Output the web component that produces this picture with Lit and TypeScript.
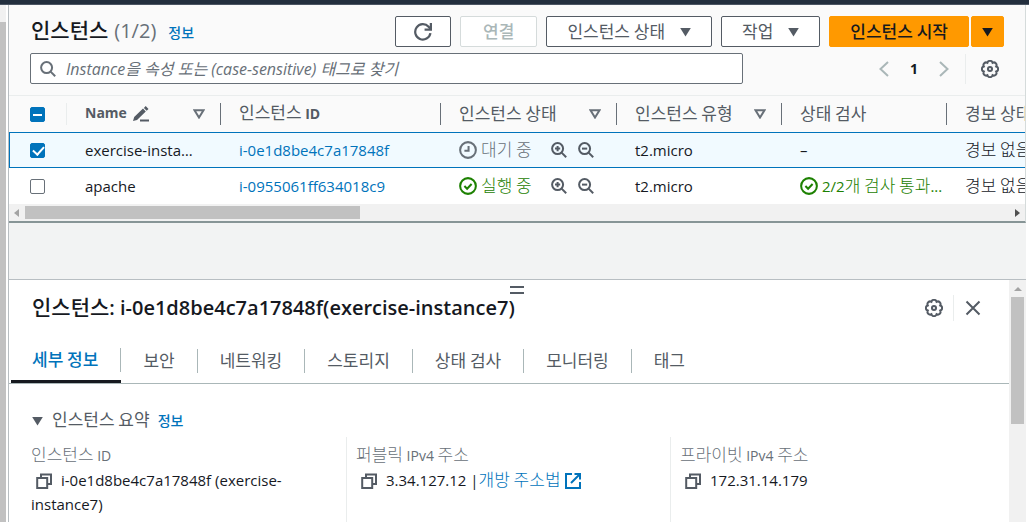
import { LitElement, html, css, svg, nothing } from "lit";
import { customElement, state } from "lit/decorators.js";
import { classMap } from "lit/directives/class-map.js";

/** Wraps every run of Hangul so that it can take its own optical size. */
const ko = (text: string) =>
  text
    .split(/([\uac00-\ud7a3]+(?: [\uac00-\ud7a3]+)*)/)
    .filter((part) => part !== "")
    .map((part) => (/[\uac00-\ud7a3]/.test(part) ? html`<span class="ko">${part}</span>` : part));

/** Eight-lobed outline of the settings wheel. */
const wheel = () => {
  const at = (k: number) => {
    const a = ((k * 45 + 22.5) * Math.PI) / 180;
    return `${(8 + 6 * Math.cos(a)).toFixed(2)} ${(8 + 6 * Math.sin(a)).toFixed(2)}`;
  };
  return `M${at(-1)}` + [0, 1, 2, 3, 4, 5, 6, 7].map((k) => `A2.4 2.4 0 0 1 ${at(k)}`).join("") + "z";
};

const icon = (body: unknown, cls = "") =>
  html`<svg class="icon ${cls}" viewBox="0 0 16 16" aria-hidden="true">${body}</svg>`;

const search = svg`<circle cx="6.6" cy="6.6" r="5.5"/><path d="M10.6 10.6 15.2 15.2"/>`;
const zoomIn = svg`${search}<path d="M6.6 4v5.2M4 6.6h5.2"/>`;
const zoomOut = svg`${search}<path d="M4 6.6h5.2"/>`;
const refresh = svg`<path d="M14.6 9A6.8 6.8 0 1 1 13 3.4L15 5.6"/><path d="M15 0v5.8H9.4"/>`;
const left = svg`<path d="M12 1 4.5 8l7.5 7"/>`;
const right = svg`<path d="M4 1l7.5 7L4 15"/>`;
const close = svg`<path d="M1.5 1.5l13 13M14.5 1.5l-13 13"/>`;
const copy = svg`<path d="M5 4.5V1.5h10v9.5h-3"/><path d="M1.2 5h10v10h-10z"/>`;
const external = svg`<path d="M7 1H1v14h14V9"/><path d="M9.5 1H15v5.5M15 1 6 10"/>`;
const clock = svg`<circle cx="8" cy="8" r="7"/><path d="M8.5 4.5v4.2H4.8"/>`;
const ok = svg`<circle cx="8" cy="8" r="7"/><path d="M4.8 8l2.4 2.4 4-4.2"/>`;
const pencil = svg`<path class="solid" d="M0 15l1.2-4L10 2.6l2.8 2.8L4 14zM10.9 1.9l1.800-1.800 2.800 2.800-1.800 1.800z"/><path d="M7 14.5h9"/>`;
const gear = svg`<path d=${wheel()} /><circle cx="8" cy="8" r="1.8"/>`;
const caret = html`<svg class="caret" viewBox="0 0 12 10" aria-hidden="true"><path d="M.2.5h11.600L6 9.800z"/></svg>`;
const sort = html`<svg class="sort" viewBox="0 0 12 10" aria-hidden="true"><path d="M1.5 1.2h9L6 8.5z"/></svg>`;

interface Instance {
  name: string;
  id: string;
  running: boolean;
  type: string;
  check: string;
  alarm: string;
}

const INSTANCES: Instance[] = [
  { name: "exercise-instance7", id: "i-0e1d8be4c7a17848f", running: false, type: "t2.micro", check: "", alarm: "경보 없음" },
  { name: "apache", id: "i-0955061ff634018c9", running: true, type: "t2.micro", check: "2/2개 검사 통과...", alarm: "경보 없음" },
];

const TABS = ["세부 정보", "보안", "네트워킹", "스토리지", "상태 검사", "모니터링", "태그"];

@customElement("app-root")
export class AppRoot extends LitElement {
  @state() private selected = "i-0e1d8be4c7a17848f";
  @state() private tab = 0;

  static styles = css`
    :host {
      display: flex;
      flex-direction: column;
      height: 100vh;
      overflow: hidden;
      font: 14px/22px "Open Sans", "Noto Sans CJK KR", sans-serif;
      color: #16191f;
      background: #fff;
    }
    * { box-sizing: border-box; }
    h1, h2, h3, p, dl, dd, dt { margin: 0; font-weight: 400; }
    button { font: inherit; color: inherit; cursor: pointer; margin: 0; }
    a { color: #0073bb; text-decoration: none; }
    .ko { font-family: "Noto Sans CJK KR", sans-serif; font-size: 17px; line-height: 20px; }
    .icon { width: 16px; height: 16px; fill: none; stroke: currentColor; stroke-width: 2; flex: none; }
    .icon .solid { fill: currentColor; stroke: none; }
    .thin { stroke-width: 1.8; }
    .big { width: 18px; height: 18px; }
    .caret { width: 11px; height: 10px; fill: currentColor; flex: none; }
    .sort { width: 12px; height: 10px; fill: none; stroke: #687078; stroke-width: 2; flex: none; }
    .bare { border: 0; background: none; padding: 0; display: flex; align-items: center; }

    .topbar { flex: none; height: 5px; background: #232f3e; border-bottom: 1px solid #4b5563; }
    .frame { flex: 1; min-height: 0; display: flex; }
    .rail { flex: none; width: 6px; margin-right: 2px; background: #c1c1c1; border-top: 17px solid #f1f1f1; }
    .main { flex: 1; min-width: 0; display: flex; flex-direction: column; background: #f2f3f3; border-left: 1px solid #b8bec2; margin-right: 3px; }

    .list { background: #fafafa; border-bottom: 2px solid #879596; border-right: 1px solid #d5dbdb; margin-bottom: 56px; }
    .head { display: flex; gap: 9px; align-items: center; padding: 11px 21px 0 22px; }
    .title { flex: 1; display: flex; align-items: baseline; font-size: 20px; line-height: 26px; color: #687078; white-space: nowrap; }
    .title b { color: #16191f; font-weight: 500; margin-right: 6px; }
    .title b .ko, .dtitle .ko { font-size: 21px; font-weight: 500; }
    .title a { margin-left: 12px; font-size: 14px; }
    .info .ko { font-size: 14px; font-weight: 500; }
    .btn { height: 31px; display: flex; align-items: center; gap: 15px; padding: 0 20px 2px; background: #fff; border: 1px solid #545b64; border-radius: 2px; color: #545b64; white-space: nowrap; }
    .btn .icon, .btn .caret { margin-top: 2px; }
    .btn.refresh { padding: 0 18px 2px; }
    .btn.off { border-color: #d5dbdb; color: #aab7b8; padding: 0 22px 2px; }
    .btn.off .ko, .btn.go .ko { font-weight: 500; }
    .split { display: flex; gap: 2px; }
    .btn.go { background: #ff9900; border-color: #ff9900; color: #16191f; }
    .btn.go + .go { padding: 0 10px 2px; }

    .tools { display: flex; gap: 133px; align-items: center; padding: 6px 21px 11px 21px; }
    .search { flex: 1; min-width: 0; display: flex; align-items: center; gap: 10px; height: 31px; padding: 0 9px; border: 1px solid #687078; border-radius: 2px; background: #fff; color: #687078; }
    .search input { flex: 1; min-width: 0; border: 0; outline: 0; padding: 0; background: none; font: 16px/20px "Open Sans", "Noto Sans CJK KR", sans-serif; }
    .search input::placeholder { color: #687078; font-style: italic; opacity: 1; }
    .pager { display: flex; align-items: center; color: #545b64; padding-right: 5px; }
    .pager .arrow { color: #aab7b8; }
    .pager b { width: 44px; text-align: center; color: #16191f; font-weight: 700; }
    .pager .cfg { margin-left: 13px; padding-left: 15px; height: 30px; border-left: 1px solid #eaeded; }

    .scroller { overflow: hidden; border-top: 1px solid #eaeded; background: #fff; }
    table { table-layout: fixed; width: 1200px; border-collapse: separate; border-spacing: 0; }
    .c0 { width: 58px; } .c1 { width: 154px; } .c2 { width: 220px; } .c3 { width: 176px; } .c4, .c5 { width: 165px; }
    th { height: 36px; padding: 0; text-align: left; font-weight: 700; color: #545b64; background: #fafafa; }
    th .ko { font-weight: 400; }
    .th { display: flex; align-items: center; height: 22px; padding: 0 15px 2px 18px; border-right: 1px solid #687078; white-space: nowrap; }
    .th .icon { margin: 2px 0 0 6px; }
    .th .sort { margin: 2px 0 0 auto; }
    .th.pick { padding: 0 0 0 21px; }
    .th.pick { border-color: #eaeded; }
    .th.last { border: 0; }
    td { height: 36px; padding: 0 0 0 18px; font-size: 15px; white-space: nowrap; overflow: hidden; text-overflow: ellipsis; }
    td:first-child { padding-left: 21px; }
    td.name { padding-right: 25px; }
    tr.on td { background: #f1faff; border-top: 1px solid #0073bb; border-bottom: 1px solid #0073bb; }
    tr.on td:first-child { border-left: 1px solid #0073bb; padding-left: 20px; }
    td .ko, .facts .ko { font-weight: 300; }
    .status { display: flex; align-items: center; gap: 4px; color: #687078; }
    .status.good { color: #1d8102; }
    .status .text { overflow: hidden; text-overflow: ellipsis; }
    .status .bare { color: #545b64; margin-left: 7px; }
    .status .text + .bare { margin-left: 15px; }
    input[type="checkbox"] { appearance: none; display: block; width: 15px; height: 15px; margin: 0; border: 1px solid #687078; border-radius: 2px; background: #fff; }
    input[type="checkbox"]:checked, input[type="checkbox"]:indeterminate { background: #0073bb; border-color: #0073bb; }
    input[type="checkbox"]:checked::after { content: ""; display: block; width: 5px; height: 9px; margin: 0 0 0 4px; border: solid #fff; border-width: 0 2px 2px 0; transform: rotate(42deg); }
    input[type="checkbox"]:indeterminate::after { content: ""; display: block; width: 9px; height: 2px; margin: 6px 2px; background: #fff; }
    .hbar { display: flex; align-items: center; height: 17px; padding: 0 5px; background: #f1f1f1; color: #a3a3a3; }
    .hbar .track { flex: 1; padding: 0 6px; }
    .hbar .thumb { width: 34%; height: 13px; background: #c1c1c1; }
    .tri { width: 5px; height: 8px; fill: currentColor; flex: none; }
    .tri.dark { color: #505050; }

    .detail { flex: 1; min-height: 0; display: flex; background: #fff; border-top: 1px solid #b8bec2; }
    .pane { flex: 1; min-width: 0; }
    .vbar { flex: none; width: 17px; padding: 7px 2px 0; background: #f1f1f1; display: flex; flex-direction: column; align-items: center; gap: 6px; color: #a3a3a3; }
    .vbar .up { width: 8px; height: 4px; fill: currentColor; }
    .vbar .thumb { width: 13px; height: 127px; background: #c1c1c1; }
    .grip { display: block; width: 14px; height: 8px; margin: 6px auto 0; border: solid #545b64; border-width: 2px 0; transform: translateX(8px); }
    .dhead { display: flex; align-items: center; padding: 1px 28px 0 23px; color: #545b64; }
    .dtitle { flex: 1; font-size: 20px; line-height: 26px; font-weight: 600; color: #16191f; white-space: nowrap; }
    .dhead .x { margin-left: 10px; padding-left: 11px; height: 26px; border-left: 1px solid #eaeded; }
    .tabs { display: flex; margin-top: 16px; padding-left: 2px; border-bottom: 1px solid #aab7b8; }
    .tab { border: 0; background: none; padding: 11px 0 9px; color: #545b64; }
    .tab span.cell { display: block; padding: 1px 22px; height: 24px; line-height: 22px; border-right: 1px solid #aab7b8; }
    .tab:first-child span.cell { padding-left: 21px; }
    .tab:last-child span.cell { border: 0; }
    .tab.on { color: #0073bb; border-bottom: 3px solid #16191f; padding-bottom: 8px; }
    .tab.on .ko { font-weight: 500; }
    .sum { display: flex; align-items: center; padding: 25px 23px 5px; color: #545b64; }
    .sum h3 { margin: 0 8px 0 9px; font-size: 14px; }
    .facts { display: grid; grid-template-columns: repeat(3, 1fr); padding: 0 15px 0 13px; }
    .fact { border-left: 1px solid #eaeded; padding: 7px 20px 40px 9px; line-height: 24px; }
    .fact:first-child { border-color: transparent; padding-left: 8px; }
    dt { color: #687078; }
    dd { font-size: 15px; }
    dd .bare { display: inline-block; line-height: 0; vertical-align: -3px; margin: 0 9px 0 5px; color: #545b64; }
    dd a .icon { vertical-align: -3px; margin-left: 4px; }
  `;

  private row(i: Instance) {
    const on = i.id === this.selected;
    return html`<tr class=${classMap({ on })}>
      <td><input type="checkbox" aria-label=${i.name} .checked=${on} @change=${() => (this.selected = on ? "" : i.id)} /></td>
      <td class="name">${i.name}</td>
      <td><a href="#${i.id}">${i.id}</a></td>
      <td>
        <div class="status ${i.running ? "good" : ""}">
          ${icon(i.running ? ok : clock, "big thin")}<span class="text">${ko(i.running ? "실행 중" : "대기 중")}</span>
          <button class="bare" aria-label="필터 추가">${icon(zoomIn)}</button>
          <button class="bare" aria-label="필터 제외">${icon(zoomOut)}</button>
        </div>
      </td>
      <td>${i.type}</td>
      <td>${i.check ? html`<div class="status good">${icon(ok, "big thin")}<span class="text">${ko(i.check)}</span></div>` : "–"}</td>
      <td>${ko(i.alarm)}</td>
    </tr>`;
  }

  render() {
    const copyButton = html`<button class="bare" aria-label="복사">${icon(copy)}</button>`;
    return html`
      <div class="topbar"></div>
      <div class="frame">
        <div class="rail"></div>
        <main class="main">
          <section class="list">
            <header class="head">
              <h1 class="title"><b>${ko("인스턴스")}</b>(1/2)<a class="info" href="#info">${ko("정보")}</a></h1>
              <button class="btn refresh" aria-label="새로 고침">${icon(refresh, "big")}</button>
              <button class="btn off" disabled>${ko("연결")}</button>
              <button class="btn">${ko("인스턴스 상태")}${caret}</button>
              <button class="btn">${ko("작업")}${caret}</button>
              <div class="split">
                <button class="btn go">${ko("인스턴스 시작")}</button>
                <button class="btn go" aria-label="더 보기">${caret}</button>
              </div>
            </header>
            <div class="tools">
              <label class="search">${icon(search)}<input type="text" aria-label="인스턴스 찾기" placeholder="Instance을 속성 또는 (case-sensitive) 태그로 찾기" /></label>
              <nav class="pager">
                <button class="bare arrow" aria-label="이전">${icon(left)}</button>
                <b>1</b>
                <button class="bare arrow" aria-label="다음">${icon(right)}</button>
                <button class="bare cfg" aria-label="기본 설정">${icon(gear, "big thin")}</button>
              </nav>
            </div>
            <div class="scroller">
              <table>
                <colgroup><col class="c0" /><col class="c1" /><col class="c2" /><col class="c3" /><col class="c4" /><col class="c5" /><col /></colgroup>
                <thead>
                  <tr>
                    <th><div class="th pick"><input type="checkbox" aria-label="모두 선택" .indeterminate=${true} /></div></th>
                    <th><div class="th">Name ${icon(pencil)}${sort}</div></th>
                    <th><div class="th"><span>${ko("인스턴스 ID")}</span></div></th>
                    <th><div class="th">${ko("인스턴스 상태")}${sort}</div></th>
                    <th><div class="th">${ko("인스턴스 유형")}${sort}</div></th>
                    <th><div class="th">${ko("상태 검사")}</div></th>
                    <th><div class="th last">${ko("경보 상태")}</div></th>
                  </tr>
                </thead>
                <tbody>${INSTANCES.map((i) => this.row(i))}</tbody>
              </table>
            </div>
            <div class="hbar">
              <svg class="tri" viewBox="0 0 5 8"><path d="M5 0v8L0 4z" /></svg>
              <div class="track"><div class="thumb"></div></div>
              <svg class="tri dark" viewBox="0 0 5 8"><path d="M0 0v8l5-4z" /></svg>
            </div>
          </section>
          <section class="detail">
            <div class="pane">
              <span class="grip"></span>
              <header class="dhead">
                <h2 class="dtitle">${ko("인스턴스: i-0e1d8be4c7a17848f(exercise-instance7)")}</h2>
                <button class="bare" aria-label="기본 설정">${icon(gear, "big thin")}</button>
                <button class="bare x" aria-label="닫기">${icon(close)}</button>
              </header>
              <div class="tabs" role="tablist">
                ${TABS.map(
                  (t, n) => html`<button role="tab" aria-selected=${n === this.tab} class=${classMap({ tab: true, on: n === this.tab })} @click=${() => (this.tab = n)}><span class="cell">${ko(t)}</span></button>`
                )}
              </div>
              ${this.tab === 0
                ? html`<div class="sum">${caret}<h3>${ko("인스턴스 요약")}</h3><a class="info" href="#info">${ko("정보")}</a></div>
                    <dl class="facts">
                      <div class="fact"><dt>${ko("인스턴스 ID")}</dt><dd>${copyButton}i-0e1d8be4c7a17848f (exercise-instance7)</dd></div>
                      <div class="fact"><dt>${ko("퍼블릭 IPv4 주소")}</dt><dd>${copyButton}3.34.127.12 |<a href="#open">${ko("개방 주소법")}${icon(external)}</a></dd></div>
                      <div class="fact"><dt>${ko("프라이빗 IPv4 주소")}</dt><dd>${copyButton}172.31.14.179</dd></div>
                    </dl>`
                : nothing}
            </div>
            <div class="vbar">
              <svg class="up" viewBox="0 0 8 4"><path d="M0 4h8L4 0z" /></svg>
              <div class="thumb"></div>
            </div>
          </section>
        </main>
      </div>
    `;
  }
}
